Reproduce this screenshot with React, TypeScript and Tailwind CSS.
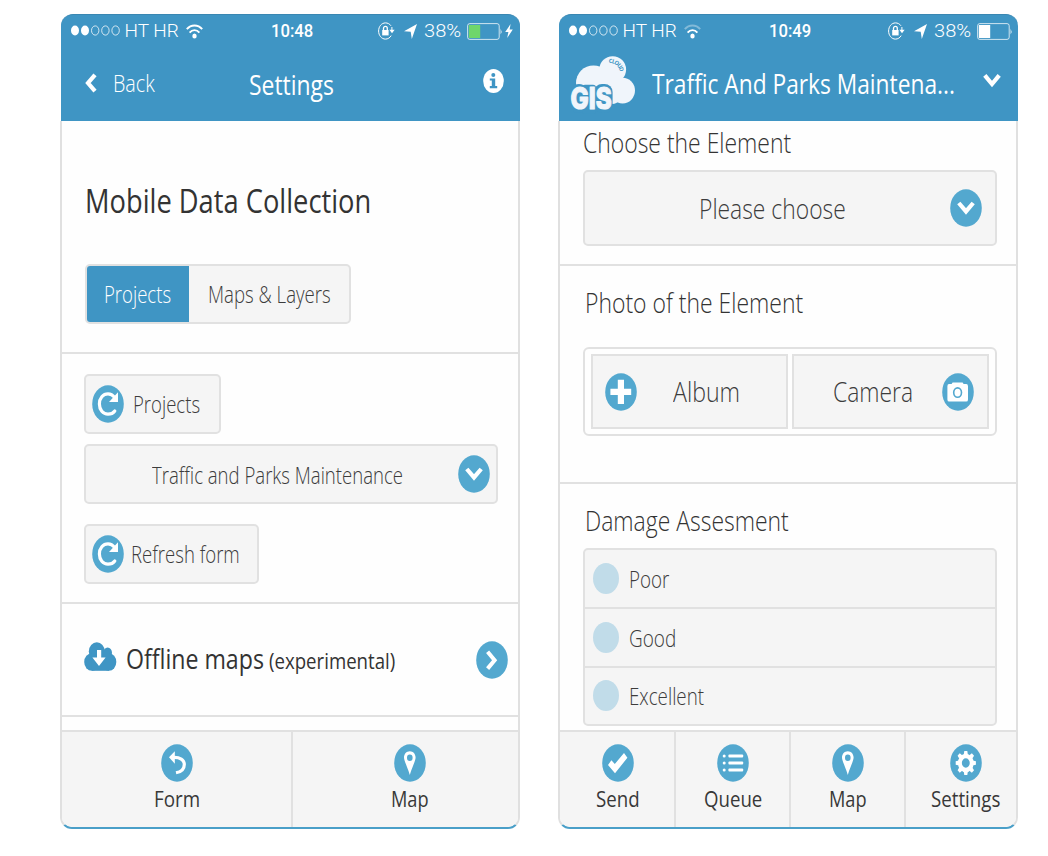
import { useLayoutEffect, useRef, type ReactNode } from "react";

/* Text condensed horizontally so that it fills the width of its box. */
function Fit({ className = "", children }: { className?: string; children: ReactNode }) {
  const box = useRef<HTMLDivElement>(null);
  const text = useRef<HTMLSpanElement>(null);
  useLayoutEffect(() => {
    if (box.current && text.current) {
      const s = box.current.clientWidth / text.current.offsetWidth;
      text.current.style.transform = `scaleX(${s})`;
    }
  });
  return (
    <div ref={box} className={`shrink-0 leading-none ${className}`}>
      <span ref={text} className="inline-block origin-left whitespace-nowrap align-top">
        {children}
      </span>
    </div>
  );
}

function Disc({ children }: { children: ReactNode }) {
  return (
    <svg viewBox="0 0 32 38" className="h-[38px] w-8 shrink-0" fill="none">
      <ellipse cx="16" cy="19" rx="15.8" ry="18.8" fill="#53a8cf" />
      {children}
    </svg>
  );
}

const Refresh = () => (
  <Disc>
    <path d="M22.6 12.4C20.8 10 18.6 8.8 16 8.8C11 8.8 7.4 13.2 7.4 19C7.4 24.8 11 29.2 16 29.2C19 29.2 21.3 28 22.8 26" stroke="#fff" strokeWidth="3.2" strokeLinecap="round" />
    <path d="M26 7.2V17H17Z" fill="#fff" />
  </Disc>
);
const Down = () => (
  <Disc>
    <path d="M8.8 14L16 22.4L23.2 14" stroke="#fff" strokeWidth="4.2" />
  </Disc>
);
const Right = () => (
  <Disc>
    <path d="M11.6 10.8L18.6 19.2L11.6 27.6" stroke="#fff" strokeWidth="4" />
  </Disc>
);
const Undo = () => (
  <Disc>
    <path d="M8 13.2L13.8 7.2V19.8Z" fill="#fff" />
    <path d="M12 13.4C19 13 23.3 16 23.3 20.4C23.3 25 20 27.8 15 28.8" stroke="#fff" strokeWidth="3.2" />
  </Disc>
);
const Pin = () => (
  <Disc>
    <path fillRule="evenodd" d="M15.8 7.2C12.4 7.2 10 10 10 13.6C10 17.2 13.4 22.5 15.8 31C18.2 22.5 21.6 17.2 21.6 13.6C21.6 10 19.2 7.2 15.8 7.2ZM15.8 10.6A2.8 3.2 0 1 1 15.8 17A2.8 3.2 0 1 1 15.8 10.6Z" fill="#fff" />
  </Disc>
);
const Check = () => (
  <Disc>
    <path d="M6 21L9.4 16.2L12.8 20L22 9L25.4 13.8L13 29.2Z" fill="#fff" />
  </Disc>
);
const List = () => (
  <Disc>
    {[12, 19, 26].map((y) => (
      <g key={y}>
        <circle cx="7.2" cy={y} r="1.5" fill="#fff" />
        <rect x="11.4" y={y - 1.5} width="14.8" height="3.1" rx="1" fill="#fff" />
      </g>
    ))}
  </Disc>
);
const Gear = () => (
  <Disc>
    <g transform="translate(15.8 19) scale(.842 1)">
      <circle r="7" stroke="#fff" strokeWidth="4.6" />
      {[0, 45, 90, 135, 180, 225, 270, 315].map((a) => (
        <path key={a} d="M-2.5 -8L-1.8 -12H1.8L2.5 -8Z" fill="#fff" transform={`rotate(${a})`} />
      ))}
    </g>
  </Disc>
);
const Plus = () => (
  <Disc>
    <path d="M12.8 6.8H19V15.8H26.2V22H19V31H12.8V22H5.4V15.8H12.8Z" fill="#fff" />
  </Disc>
);
const Camera = () => (
  <Disc>
    <path d="M7 11H9.6L10.6 9.6H20.6L21.6 11H24.2Q26 11 26 13.2V26.4Q26 28.6 24.2 28.6H7.2Q5.4 28.6 5.4 26.4V13.2Q5.4 11 7 11Z" fill="#fff" />
    <ellipse cx="15.6" cy="19.6" rx="3.9" ry="4.7" stroke="#53a8cf" strokeWidth="1.6" />
  </Disc>
);

function Signal() {
  return (
    <svg viewBox="0 0 49 12" className="h-3 w-[49px] shrink-0" fill="#fff">
      <ellipse cx="4" cy="5.5" rx="4" ry="4.9" />
      <ellipse cx="14" cy="5.5" rx="4" ry="4.9" />
      {[24.2, 34.4, 44.6].map((x) => (
        <ellipse key={x} cx={x} cy="5.5" rx="3.7" ry="4.6" fill="none" stroke="#fff" strokeWidth=".9" strokeOpacity=".85" />
      ))}
    </svg>
  );
}

function StatusBar({ time, charging }: { time: string; charging?: boolean }) {
  return (
    <div className="flex h-[34px] items-center pb-[2px] pl-[9.5px] text-[19px] text-white">
      <Signal />
      <Fit className="-mt-px ml-[5px] w-[53.5px] font-[Roboto] font-light">HT HR</Fit>
      <svg viewBox="0 0 17 15" className="ml-[8px] h-[15px] w-[17px] shrink-0" fill="none" stroke="#fff" strokeWidth="1.9">
        <path d="M.8 5.2C5 .2 12 .2 16.2 5.2" strokeOpacity={charging ? 1 : 0.35} />
        <path d="M3.6 8.6C6.4 5.3 10.6 5.3 13.4 8.6" />
        <ellipse cx="8.5" cy="12" rx="2.2" ry="2.6" fill="#fff" stroke="none" />
      </svg>
      <Fit className={`-mt-px w-[42px] font-[Roboto] font-medium ${charging ? "ml-[68px]" : "ml-[68px]"}`}>{time}</Fit>
      <svg viewBox="0 0 17 18" className={`h-[18px] w-[17px] shrink-0 ${charging ? "ml-[65px]" : "ml-[77px]"}`} fill="none" stroke="#fff">
        <path d="M13 3.8C11.6 1.8 9.6.9 7.4.9C3.6.9.6 4.5.6 9C.6 13.5 3.6 17.1 7.4 17.1C9.8 17.1 12 15.8 13.2 13.6" strokeWidth="1" />
        <path d="M13.9 5V8.6" strokeWidth="1" />
        <path d="M11.4 7.8H16.6L14 11.2Z" fill="#fff" stroke="none" />
        <rect x="4.2" y="8" width="6.4" height="5.4" fill="#fff" stroke="none" />
        <path d="M5.5 8V6.4C5.5 3.8 9.3 3.8 9.3 6.4V8" strokeWidth="1.3" />
      </svg>
      <svg viewBox="0 0 13 15" className="ml-[9px] h-[15px] w-[13px] shrink-0" fill="#fff">
        <path d="M13 0L7.8 15L6.7 7.8L0 7.2Z" />
      </svg>
      <Fit className="-mt-px ml-[7px] w-[37px] font-[Roboto] font-light">38%</Fit>
      <svg viewBox="0 0 36 17" className="ml-[5.5px] h-[17px] w-9 shrink-0" fill="none">
        <rect x=".6" y=".6" width="31.6" height="15.8" rx="2.2" stroke="#fff" strokeOpacity=".75" />
        <rect x="1.8" y="2" width="11.4" height="13" fill={charging ? "#6fd66c" : "#fff"} />
        <path d="M33.6 5.5Q35.4 8.5 33.6 11.5Z" fill="#fff" />
      </svg>
      {charging && (
        <svg viewBox="0 0 8 14" className="ml-[2px] h-3.5 w-2 shrink-0" fill="#fff">
          <path d="M5.6 0L.2 8H3.4L2.2 14L7.8 5.4H4.6Z" />
        </svg>
      )}
    </div>
  );
}

function GisLogo() {
  return (
    <svg viewBox="0 0 66 60" className="h-[60px] w-[66px] shrink-0" fill="#f0f5fb">
      <circle cx="42.7" cy="13.6" r="13.4" />
      <ellipse cx="23.5" cy="27" rx="17.5" ry="17.6" />
      <ellipse cx="52.6" cy="34.6" rx="12.4" ry="12.8" />
      <path d="M22 20H50V44Q44 51 36 46Z" />
      <g fill="#3f95c4">
        <ellipse cx="9" cy="42.5" rx="11" ry="14.5" />
        <rect x="12" y="28.8" width="14" height="29" rx="3" />
        <rect x="24" y="28" width="18.6" height="29" rx="8" />
      </g>
      <g fontFamily="Inter, sans-serif" fontWeight="800" fontSize="30" stroke="#f0f5fb" strokeWidth="1.2" strokeLinejoin="round">
        <text x=".6" y="53.2" textLength="41" lengthAdjust="spacingAndGlyphs">
          GIS
        </text>
      </g>
      <path id="cloud-arc" d="M38.8 7.2C44.5 6.2 49.4 10 50.6 18.5" fill="none" />
      <text fontFamily="Open Sans, sans-serif" fontWeight="700" fontSize="5.8" fill="#3f95c4">
        <textPath href="#cloud-arc" textLength="16">CLOUD</textPath>
      </text>
    </svg>
  );
}

const header = "ml-px h-[107px] shrink-0 rounded-t-[12px] border-t border-[#3a87b2] bg-[#3f95c4]";
const body = "flex flex-1 flex-col overflow-hidden rounded-b-[12px] border-x-2 border-b-2 border-x-[#e0e0e0] border-b-[#4a9fc8] bg-[#fefefe]";
const btn = "flex items-center rounded-[5px] border-2 border-[#e1e1e1] bg-[#f5f5f5]";

function Tab({ icon, label, width, className = "" }: { icon: ReactNode; label: string; width: string; className?: string }) {
  return (
    <div className={`flex flex-col items-center pt-[12px] ${className}`}>
      {icon}
      <Fit className={`mt-[6px] text-[22.5px] text-[#383838] ${width}`}>{label}</Fit>
    </div>
  );
}

function SettingsPhone() {
  return (
    <div className="flex h-[815px] w-[460px] flex-col">
      <div className={header}>
        <StatusBar time="10:48" charging />
        <div className="flex items-start text-white">
          <svg viewBox="0 0 12 20" className="ml-[24px] mt-[24px] h-5 w-3 shrink-0" fill="none">
            <path d="M10 1.8L3 10L10 18.2" stroke="#fff" strokeWidth="4.2" />
          </svg>
          <Fit className="ml-[16px] mt-[23px] w-[42px] text-[23px] font-light">Back</Fit>
          <Fit className="ml-[94px] mt-[21px] w-[85px] text-[28px]">Settings</Fit>
          <svg viewBox="0 0 21 24" className="ml-[148.5px] mt-[20px] h-6 w-[21px] shrink-0">
            <ellipse cx="10.5" cy="12" rx="10.3" ry="12" fill="#fff" />
            <ellipse cx="10.3" cy="6" rx="2" ry="2.1" fill="#3f95c4" />
            <path d="M6.8 9.4H12.2V17H14.2V19.2H6.8V17H8.8V11.6H6.8Z" fill="#3f95c4" />
          </svg>
        </div>
      </div>
      <div className={body}>
        <div className="h-[233px] shrink-0 border-b-2 border-[#e1e1e1] pl-[23px] pt-[63px]">
          <Fit className="w-[285.5px] text-[33px] text-[#333]">Mobile Data Collection</Fit>
          <div className={`mt-[47px] h-[60px] w-[266px] overflow-hidden ${btn}`}>
            <div className="flex h-full w-[102px] items-center bg-[#3f95c4] pl-[16.5px] pt-px text-white">
              <Fit className="w-[67px] text-[23px] font-light">Projects</Fit>
            </div>
            <Fit className="ml-[19px] mt-px w-[123px] text-[23px] font-light text-[#3c3c3c]">Maps &amp; Layers</Fit>
          </div>
        </div>
        <div className="h-[250px] shrink-0 border-b-2 border-[#e1e1e1] pl-[22px] pt-[20px] text-[23px] font-light text-[#3c3c3c]">
          <div className={`h-[60px] w-[137px] pl-[6px] ${btn}`}>
            <Refresh />
            <Fit className="mt-px ml-[9px] w-[67px]">Projects</Fit>
          </div>
          <div className={`mt-[10px] h-[60px] w-[414px] pl-[66px] ${btn}`}>
            <Fit className="mt-[2px] w-[251px]">Traffic and Parks Maintenance</Fit>
            <div className="ml-[55px]"><Down /></div>
          </div>
          <div className={`mt-[20px] h-[60px] w-[175px] pl-[6px] ${btn}`}>
            <Refresh />
            <Fit className="mt-px ml-[7px] w-[109px]">Refresh form</Fit>
          </div>
        </div>
        <div className="flex h-[113px] shrink-0 items-center border-b-2 border-[#e1e1e1] pl-[22px] text-[#333]">
          <svg viewBox="0 0 33 29" className="-mt-[6px] h-[29px] w-[33px] shrink-0" fill="#3f95c4">
            <ellipse cx="12.8" cy="9.4" rx="8" ry="9.2" />
            <ellipse cx="23.6" cy="10.8" rx="4.4" ry="5.4" />
            <ellipse cx="7.8" cy="20" rx="7.6" ry="8.8" />
            <ellipse cx="25" cy="20" rx="7.3" ry="8.8" />
            <rect x="7.8" y="10" width="17.2" height="18.8" />
            <path d="M13 8H17.2V15.6H21.6L15 24L8.4 15.6H13Z" fill="#fff" />
          </svg>
          <Fit className="-mt-px ml-[8.5px] w-[138px] text-[27.5px]">Offline maps</Fit>
          <Fit className="ml-[5.5px] mt-[3px] w-[126px] text-[21px]">(experimental)</Fit>
          <div className="ml-[81px]"><Right /></div>
        </div>
        <div className="mt-[13px] grid flex-1 grid-cols-[231px_1fr] border-t-2 border-[#e1e1e1] bg-[#f5f5f5]">
          <Tab icon={<Undo />} label="Form" width="w-[46px]" className="border-r-2 border-[#e1e1e1] pl-px" />
          <Tab icon={<Pin />} label="Map" width="w-[38px]" className="pl-[9px]" />
        </div>
      </div>
    </div>
  );
}

function FormPhone() {
  return (
    <div className="flex h-[815px] w-[460px] flex-col">
      <div className={header}>
        <StatusBar time="10:49" />
        <div className="flex items-start text-white">
          <div className="ml-[11px] mt-[7px]"><GisLogo /></div>
          <Fit className="ml-[16px] mt-[20px] w-[303px] text-[28px]">Traffic And Parks Maintena...</Fit>
          <svg viewBox="0 0 18 15" className="ml-[28px] mt-[24px] h-[15px] w-[18px] shrink-0" fill="none">
            <path d="M1.8 2.4L9 11L16.2 2.4" stroke="#fff" strokeWidth="4.2" />
          </svg>
        </div>
      </div>
      <div className={body}>
        <div className="h-[145px] shrink-0 border-b-2 border-[#e1e1e1] pl-[22.5px] pt-[7px]">
          <Fit className="w-[208px] text-[28px] font-light text-[#333]">Choose the Element</Fit>
          <div className={`mt-[14px] h-[76px] w-[414px] pl-[114px] ${btn}`}>
            <Fit className="-mt-px w-[147px] text-[28px] font-light text-[#3c3c3c]">Please choose</Fit>
            <div className="ml-[104px]"><Down /></div>
          </div>
        </div>
        <div className="h-[218px] shrink-0 border-b-2 border-[#e1e1e1] pl-[22.5px] pt-[22px]">
          <Fit className="ml-[2.5px] w-[218px] text-[28px] font-light text-[#333]">Photo of the Element</Fit>
          <div className="mt-[31px] flex h-[89px] w-[414px] gap-1 rounded-[6px] border-2 border-[#e1e1e1] p-[5px] pl-[6px] text-[28px] font-light text-[#3c3c3c]">
            <div className="flex w-[197px] items-center border-2 border-[#e1e1e1] bg-[#f5f5f5] pl-[12.5px]">
              <Plus />
              <Fit className="-mt-[2px] ml-[36px] w-[66.5px]">Album</Fit>
            </div>
            <div className="flex w-[197px] items-center border-2 border-[#e1e1e1] bg-[#f5f5f5] pl-[39px]">
              <Fit className="-mt-[2px] w-[80px]">Camera</Fit>
              <div className="ml-[29px]"><Camera /></div>
            </div>
          </div>
        </div>
        <div className="shrink-0 pl-[22.5px] pt-[22px]">
          <Fit className="ml-[2.5px] w-[204px] text-[28px] font-light text-[#333]">Damage Assesment</Fit>
          <div className="mt-[14px] h-[178px] w-[414px] overflow-hidden rounded-[5px] border-2 border-[#e1e1e1] bg-[#f5f5f5] text-[23px] font-light text-[#3c3c3c]">
            <div className="flex h-[59px] items-center border-b-2 border-[#e1e1e1] pl-[8.5px]">
              <div className="h-[31px] w-[26px] rounded-[50%] bg-[#c1dce9]" />
              <Fit className="ml-[9.5px] mt-[2px] w-[40px]">Poor</Fit>
            </div>
            <div className="flex h-[59px] items-center border-b-2 border-[#e1e1e1] pl-[8.5px]">
              <div className="-mt-px h-[31px] w-[26px] rounded-[50%] bg-[#c1dce9]" />
              <Fit className="mt-px ml-[9.5px] w-[46.5px]">Good</Fit>
            </div>
            <div className="flex h-[56px] items-center pl-[8.5px]">
              <div className="-mt-px h-[31px] w-[26px] rounded-[50%] bg-[#c1dce9]" />
              <Fit className="mt-px ml-[9.5px] w-[74.5px]">Excellent</Fit>
            </div>
          </div>
        </div>
        <div className="mt-[4px] grid flex-1 grid-cols-[116px_115px_115px_1fr] border-t-2 border-[#e1e1e1] bg-[#f5f5f5]">
          <Tab icon={<Check />} label="Send" width="w-[44px]" className="border-r-2 border-[#e1e1e1] pl-px" />
          <Tab icon={<List />} label="Queue" width="w-[58px]" className="border-r-2 border-[#e1e1e1]" />
          <Tab icon={<Pin />} label="Map" width="w-[38px]" className="border-r-2 border-[#e1e1e1]" />
          <Tab icon={<Gear />} label="Settings" width="w-[69px]" className="pl-[9px]" />
        </div>
      </div>
    </div>
  );
}

export default function App() {
  return (
    <div className="flex h-[856px] w-[1048px] gap-[38px] overflow-hidden bg-white pl-[60px] pt-[14px] font-['Open_Sans',sans-serif]">
      <SettingsPhone />
      <FormPhone />
    </div>
  );
}
